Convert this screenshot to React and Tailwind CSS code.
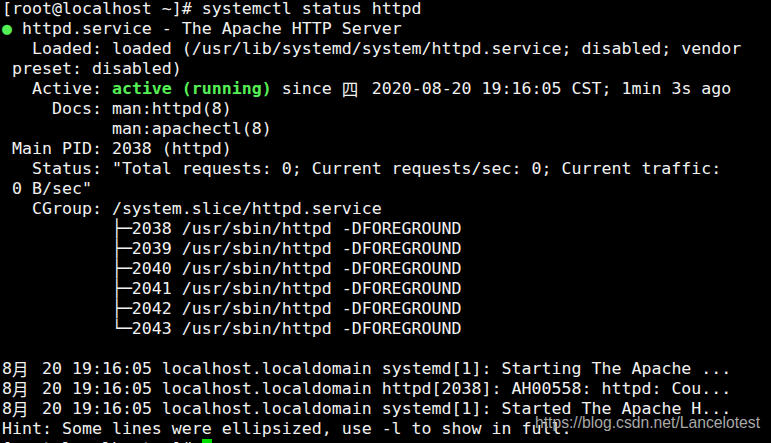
import React from "react";

const G = "text-[#55f055] font-bold";

const Cjk = ({ children }) => (
  <span className="inline-block w-[20px] h-[20px] align-top leading-[20px] font-['Noto_Sans_CJK_SC',sans-serif] text-[16.6px]">{children}</span>
);

const tree = ["2038", "2039", "2040", "2041", "2042", "2043"];

const logs = [
  "systemd[1]: Starting The Apache ...",
  "httpd[2038]: AH00558: httpd: Cou...",
  "systemd[1]: Started The Apache H...",
];

export default function App() {
  return (
    <div className="relative w-[771px] h-[443px] overflow-hidden bg-black">
      <div className="-mt-[1px] pl-[2px] whitespace-pre text-[#f2f2f2] text-[16.6px] leading-[20px] font-['DejaVu_Sans_Mono',monospace]">
        <div className="h-[20px]">[root@localhost ~]# systemctl status httpd</div>
        <div className="h-[20px]">
          <span className="text-[#55f055]">●</span> httpd.service - The Apache HTTP Server
        </div>
        <div className="h-[20px]">   Loaded: loaded (/usr/lib/systemd/system/httpd.service; disabled; vendor</div>
        <div className="h-[20px]"> preset: disabled)</div>
        <div className="h-[20px]">
          {"   Active: "}
          <span className={G}>active (running)</span>
          {" since "}
          <Cjk>四</Cjk>
          {" 2020-08-20 19:16:05 CST; 1min 3s ago"}
        </div>
        <div className="h-[20px]">     Docs: man:httpd(8)</div>
        <div className="h-[20px]">           man:apachectl(8)</div>
        <div className="h-[20px]"> Main PID: 2038 (httpd)</div>
        <div className="h-[20px]">   Status: "Total requests: 0; Current requests/sec: 0; Current traffic:</div>
        <div className="h-[20px]"> 0 B/sec"</div>
        <div className="h-[20px]">   CGroup: /system.slice/httpd.service</div>
        {tree.map((pid, i) => (
          <div key={pid} className="h-[20px]">
            {"           " + (i === tree.length - 1 ? "└─" : "├─") + pid + " /usr/sbin/httpd -DFOREGROUND"}
          </div>
        ))}
        <div className="h-[20px]"> </div>
        {logs.map((l) => (
          <div key={l} className="h-[20px]">
            8<Cjk>月</Cjk>{" 20 19:16:05 localhost.localdomain " + l}
          </div>
        ))}
        <div className="h-[20px]">Hint: Some lines were ellipsized, use -l to show in full.</div>
        <div className="h-[20px]">
          [root@localhost ~]# <span className="inline-block w-[10px] h-[20px] align-top bg-[#00e000]"></span>
        </div>
      </div>
      <div className="absolute right-[11px] top-[414px] text-[15.7px] leading-[18px] text-[#a8a8a8] font-['Liberation_Sans',sans-serif]">
        https://blog.csdn.net/Lancelotest
      </div>
    </div>
  );
}
